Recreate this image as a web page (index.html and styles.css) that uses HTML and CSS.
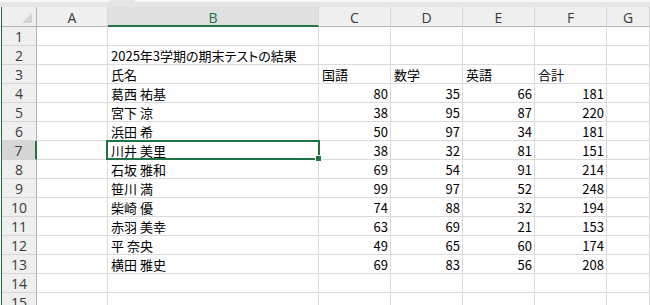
FILE: index.html
```html
<!DOCTYPE html>
<html lang="ja">
<head>
<meta charset="utf-8">
<title>期末テストの結果</title>
<link rel="stylesheet" href="styles.css">
</head>
<body>
<div class="app">
  <div class="fbar">
    <div class="namebox"></div>
    <div class="formula"></div>
  </div>
  <div class="sheet">
    <div class="corner"><span class="tri"></span></div>
    <div class="ch">A</div>
    <div class="ch ch-sel">B</div>
    <div class="ch">C</div>
    <div class="ch">D</div>
    <div class="ch">E</div>
    <div class="ch">F</div>
    <div class="ch">G</div>

    <div class="rh">1</div><div class="c"></div><div class="c"></div><div class="c"></div><div class="c"></div><div class="c"></div><div class="c"></div><div class="c"></div>

    <div class="rh">2</div><div class="c"></div><div class="c t over">2025年3学期の期末テストの結果</div><div class="c"></div><div class="c"></div><div class="c"></div><div class="c"></div><div class="c"></div>

    <div class="rh">3</div><div class="c"></div><div class="c t">氏名</div><div class="c t">国語</div><div class="c t">数学</div><div class="c t">英語</div><div class="c t">合計</div><div class="c"></div>

    <div class="rh">4</div><div class="c"></div><div class="c t">葛西 祐基</div><div class="c n">80</div><div class="c n">35</div><div class="c n">66</div><div class="c n">181</div><div class="c"></div>

    <div class="rh">5</div><div class="c"></div><div class="c t">宮下 涼</div><div class="c n">38</div><div class="c n">95</div><div class="c n">87</div><div class="c n">220</div><div class="c"></div>

    <div class="rh">6</div><div class="c"></div><div class="c t">浜田 希</div><div class="c n">50</div><div class="c n">97</div><div class="c n">34</div><div class="c n">181</div><div class="c"></div>

    <div class="rh rh-sel">7</div><div class="c"></div><div class="c t active">川井 美里<span class="cursor"><span class="handle"></span></span></div><div class="c n">38</div><div class="c n">32</div><div class="c n">81</div><div class="c n">151</div><div class="c"></div>

    <div class="rh">8</div><div class="c"></div><div class="c t">石坂 雅和</div><div class="c n">69</div><div class="c n">54</div><div class="c n">91</div><div class="c n">214</div><div class="c"></div>

    <div class="rh">9</div><div class="c"></div><div class="c t">笹川 満</div><div class="c n">99</div><div class="c n">97</div><div class="c n">52</div><div class="c n">248</div><div class="c"></div>

    <div class="rh">10</div><div class="c"></div><div class="c t">柴崎 優</div><div class="c n">74</div><div class="c n">88</div><div class="c n">32</div><div class="c n">194</div><div class="c"></div>

    <div class="rh">11</div><div class="c"></div><div class="c t">赤羽 美幸</div><div class="c n">63</div><div class="c n">69</div><div class="c n">21</div><div class="c n">153</div><div class="c"></div>

    <div class="rh">12</div><div class="c"></div><div class="c t">平 奈央</div><div class="c n">49</div><div class="c n">65</div><div class="c n">60</div><div class="c n">174</div><div class="c"></div>

    <div class="rh">13</div><div class="c"></div><div class="c t">横田 雅史</div><div class="c n">69</div><div class="c n">83</div><div class="c n">56</div><div class="c n">208</div><div class="c"></div>

    <div class="rh">14</div><div class="c"></div><div class="c"></div><div class="c"></div><div class="c"></div><div class="c"></div><div class="c"></div><div class="c"></div>

    <div class="rh">15</div><div class="c"></div><div class="c"></div><div class="c"></div><div class="c"></div><div class="c"></div><div class="c"></div><div class="c"></div>
  </div>
</div>
</body>
</html>
```

FILE: styles.css
```css
* {
  box-sizing: border-box;
}

html, body {
  margin: 0;
  padding: 0;
  background: #ffffff;
  overflow: hidden;
}

.app {
  width: 650px;
  height: 305px;
  overflow: hidden;
  background: #ffffff;
}

/* bottom edge of the formula bar */
.fbar {
  height: 7px;
  background: #e6e6e6;
  display: flex;
  gap: 25px;
  align-items: flex-start;
}

.namebox {
  width: 110px;
  height: 2px;
  background: #f7f7f7;
}

.formula {
  flex: 1;
  height: 2px;
  background: #f7f7f7;
}

/* worksheet grid */
.sheet {
  display: grid;
  grid-template-columns: 35px 71px 211px 72px 72px 72px 72px 1fr;
  grid-template-rows: 20px;
  grid-auto-rows: 19px;
  margin-left: 1px;
  border-left: 1px solid #1f6b40;
  font-family: "Noto Sans CJK JP", "Noto Sans", sans-serif;
  font-size: 13px;
  color: #000000;
}

.corner {
  position: relative;
  background: #efefef;
  border-right: 1px solid #b4b4b4;
  border-bottom: 1px solid #b4b4b4;
}

.tri {
  position: absolute;
  right: 4px;
  bottom: 3px;
  width: 0;
  height: 0;
  border-left: 10px solid transparent;
  border-bottom: 10px solid #d3d3d3;
}

.ch {
  background: #efefef;
  border-right: 1px solid #d6d6d6;
  border-bottom: 1px solid #b4b4b4;
  font-family: "Open Sans", "Noto Sans", sans-serif;
  font-size: 14px;
  color: #3b3b3b;
  display: flex;
  align-items: center;
  justify-content: center;
  padding-top: 1px;
}

.ch-sel {
  background: #e0e0e0;
  color: #1e7145;
  border-bottom: 2px solid #217346;
  padding-top: 2px;
}

.rh {
  background: #efefef;
  border-right: 1px solid #b4b4b4;
  border-bottom: 1px solid #d6d6d6;
  font-family: "Open Sans", "Noto Sans", sans-serif;
  font-size: 14px;
  color: #3b3b3b;
  display: flex;
  align-items: center;
  justify-content: center;
}

.rh-sel {
  background: #d6d6d6;
  border-right: 2px solid #217346;
}

.c {
  border-right: 1px solid #dadada;
  border-bottom: 1px solid #dadada;
  line-height: 18px;
  white-space: nowrap;
  padding: 1px 2px 0 2px;
  font-feature-settings: "palt";
}

.t {
  text-align: left;
  padding-left: 3px;
}

.n {
  text-align: right;
}

.over {
  overflow: visible;
  position: relative;
  z-index: 1;
}

/* active cell outline with fill handle */
.active {
  position: relative;
}

.cursor {
  position: absolute;
  left: -2px;
  top: -1px;
  right: -2px;
  bottom: -1px;
  border: 2px solid #217346;
}

.handle {
  position: absolute;
  right: -4px;
  bottom: -4px;
  width: 7px;
  height: 7px;
  background: #217346;
  border: 1px solid #ffffff;
}
```
